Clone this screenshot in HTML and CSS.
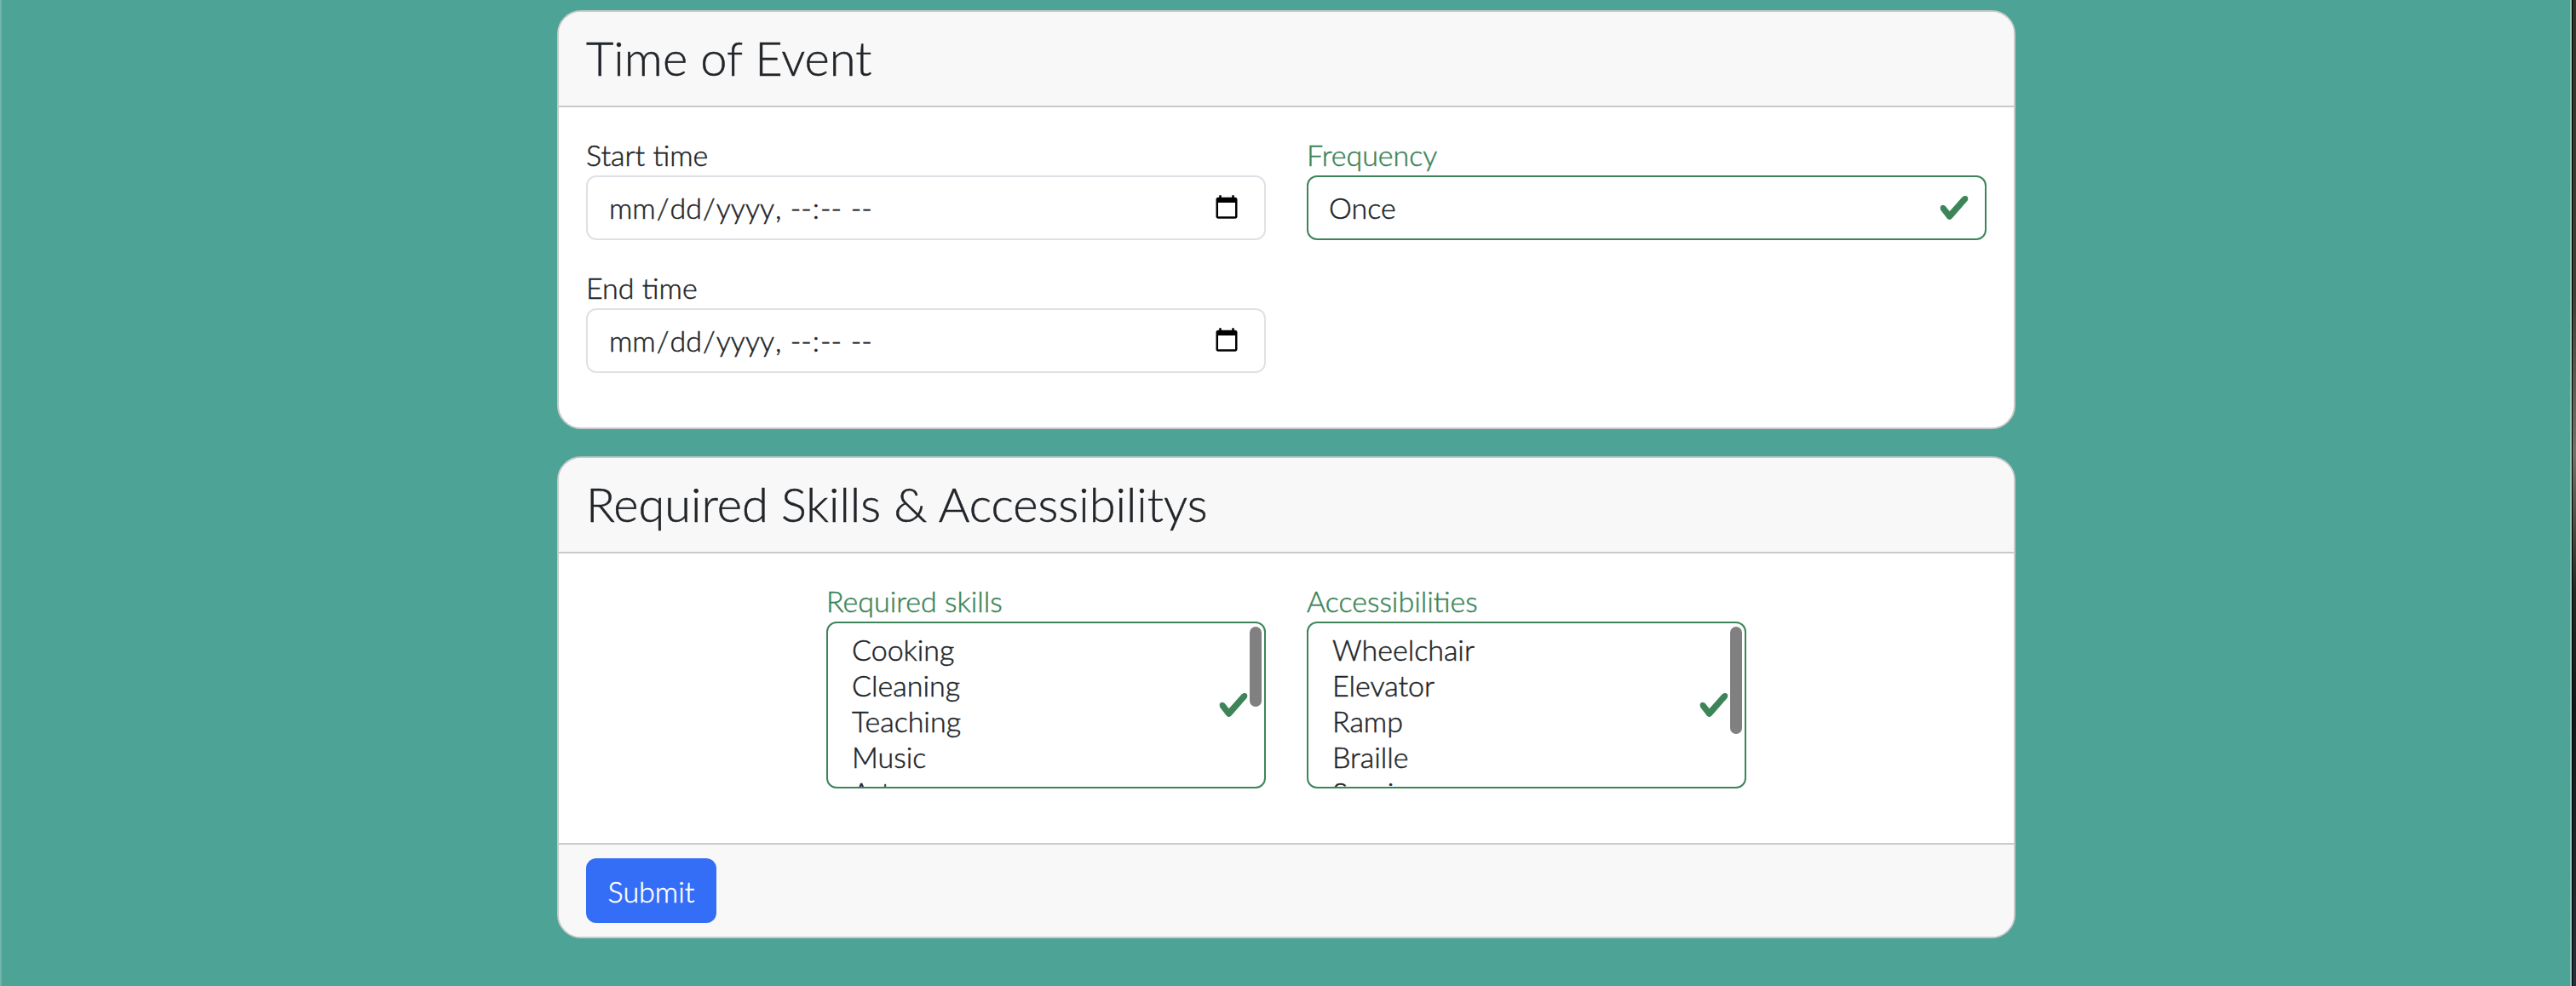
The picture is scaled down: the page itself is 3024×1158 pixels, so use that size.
FILE: index.html
```html
<!DOCTYPE html>
<html lang="en">
<head>
    <meta charset="UTF-8">
    <meta name="viewport" content="width=device-width, initial-scale=1.0">
    <title>Create Event</title>
    <link rel="stylesheet" href="styles.css">
</head>
<body>
    <div class="page">
        <main class="content">
            <form class="event-form">
                <section class="card">
                    <div class="card-header">
                        <h3>Time of Event</h3>
                    </div>
                    <div class="card-body">
                        <div class="row">
                            <div class="col-half">
                                <div class="field">
                                    <label for="startTime">Start time</label>
                                    <input class="form-control" type="datetime-local" id="startTime">
                                </div>
                                <div class="field">
                                    <label for="endTime">End time</label>
                                    <input class="form-control" type="datetime-local" id="endTime">
                                </div>
                            </div>
                            <div class="col-half">
                                <div class="field is-valid">
                                    <label for="frequency">Frequency</label>
                                    <div class="form-control valid-box" id="frequency">
                                        Once
                                        <svg class="check" viewBox="0 0 8 8"><path d="M2.3 6.73.6 4.53c-.4-1.04.46-1.4 1.1-.8l1.1 1.4 3.4-3.8c.6-.63 1.6-.27 1.2.7l-4 4.6c-.43.5-.8.4-1.1.1z"/></svg>
                                    </div>
                                </div>
                            </div>
                        </div>
                    </div>
                </section>

                <section class="card">
                    <div class="card-header">
                        <h3>Required Skills &amp; Accessibilitys</h3>
                    </div>
                    <div class="card-body">
                        <div class="row row-center">
                            <div class="col-third">
                                <div class="field is-valid">
                                    <label>Required skills</label>
                                    <div class="listbox valid-box">
                                        <ul>
                                            <li>Cooking</li>
                                            <li>Cleaning</li>
                                            <li>Teaching</li>
                                            <li>Music</li>
                                            <li>Art</li>
                                        </ul>
                                        <svg class="check" viewBox="0 0 8 8"><path d="M2.3 6.73.6 4.53c-.4-1.04.46-1.4 1.1-.8l1.1 1.4 3.4-3.8c.6-.63 1.6-.27 1.2.7l-4 4.6c-.43.5-.8.4-1.1.1z"/></svg>
                                        <span class="thumb thumb-short"></span>
                                    </div>
                                </div>
                            </div>
                            <div class="col-third">
                                <div class="field is-valid">
                                    <label>Accessibilities</label>
                                    <div class="listbox valid-box">
                                        <ul>
                                            <li>Wheelchair</li>
                                            <li>Elevator</li>
                                            <li>Ramp</li>
                                            <li>Braille</li>
                                            <li>Service</li>
                                        </ul>
                                        <svg class="check" viewBox="0 0 8 8"><path d="M2.3 6.73.6 4.53c-.4-1.04.46-1.4 1.1-.8l1.1 1.4 3.4-3.8c.6-.63 1.6-.27 1.2.7l-4 4.6c-.43.5-.8.4-1.1.1z"/></svg>
                                        <span class="thumb thumb-long"></span>
                                    </div>
                                </div>
                            </div>
                        </div>
                    </div>
                    <div class="card-footer">
                        <button class="btn-submit" type="button">Submit</button>
                    </div>
                </section>
            </form>
        </main>
        <div class="window-edge"></div>
    </div>
</body>
</html>
```

FILE: styles.css
```css
/* Page is laid out at double size, the reference is a retina capture */
html, body {
    height: 100%;
    margin: 0;
    overflow: hidden;
}
body {
    font-family: "Lato", "Open Sans", sans-serif;
    font-size: 34px;
    font-weight: 300;
    line-height: 48px;
    color: #212529;
    background-color: #4ca396;
    -webkit-text-stroke: .5px;
}
.page {
    display: flex;
    height: 100%;
}
.content {
    flex: 1;
    border-left: 2px solid #6fb5a9;
    border-right: 2px solid #8fc4ba;
    padding-top: 12px;
}
.window-edge {
    width: 4px;
    border-left: 1px solid #000;
    background: linear-gradient(#2e3526, #3c4232 30%, #707565 46%, #232a22 60%, #12181a 72%, #26303a 100%);
}
.event-form {
    width: 1712px;
    margin-left: 652px;
}

/* Cards */
.card {
    border: 2px solid #cacaca;
    border-radius: 28px;
    background-color: #fff;
    margin-bottom: 32px;
    overflow: hidden;
}
.card-header {
    height: 90px;
    padding: 20px 32px 0;
    background-color: #f8f8f8;
    border-bottom: 2px solid #cacaca;
}
.card-header h3 {
    margin: 0;
    font-size: 56px;
    font-weight: 300;
    line-height: 67px;
}
.card-body {
    padding: 32px;
}
.card-footer {
    padding: 16px 32px;
    background-color: #f8f8f8;
    border-top: 2px solid #cacaca;
}

/* Grid */
.row {
    display: flex;
    margin: 0 -24px;
}
.row-center {
    justify-content: center;
}
.col-half {
    width: 846px;
    padding: 0 24px;
    box-sizing: border-box;
}
.col-third {
    width: 564px;
    padding: 0 24px;
    box-sizing: border-box;
}

/* Form fields */
.field {
    margin-bottom: 32px;
}
.field label {
    display: block;
}
.form-control {
    display: block;
    width: 100%;
    height: 76px;
    box-sizing: border-box;
    padding: 12px 24px;
    font-family: inherit;
    font-size: 34px;
    font-weight: 300;
    line-height: 48px;
    color: #212529;
    background-color: #fff;
    border: 2px solid #dee2e6;
    border-radius: 12px;
}
input.form-control::-webkit-calendar-picker-indicator {
    width: 32px;
    height: 32px;
    padding: 0;
    margin: 0 4px 0 0;
}
.is-valid label {
    color: #3d8559;
}
.valid-box {
    position: relative;
    border-color: #3d8559;
}
.check {
    position: absolute;
    right: 18px;
    top: 50%;
    width: 36px;
    height: 36px;
    margin-top: -18px;
    fill: #3d8559;
    stroke: #3d8559;
    stroke-width: .25;
}

/* Multiple select look */
.listbox {
    height: 196px;
    box-sizing: border-box;
    border: 2px solid #3d8559;
    border-radius: 12px;
    overflow: hidden;
}
.listbox ul {
    list-style: none;
    margin: 0;
    padding: 10px 24px;
}
.listbox li {
    height: 42px;
    line-height: 42px;
    padding: 0 4px;
}
.thumb {
    position: absolute;
    top: 4px;
    right: 3px;
    width: 14px;
    border-radius: 7px;
    background-color: #808080;
}
.thumb-short {
    height: 94px;
}
.thumb-long {
    height: 126px;
}

/* Button */
.btn-submit {
    display: block;
    width: 153px;
    height: 76px;
    padding: 0;
    font-family: inherit;
    font-size: 34px;
    font-weight: 300;
    color: #fff;
    background-color: #346ef6;
    border: none;
    border-radius: 12px;
}
```
